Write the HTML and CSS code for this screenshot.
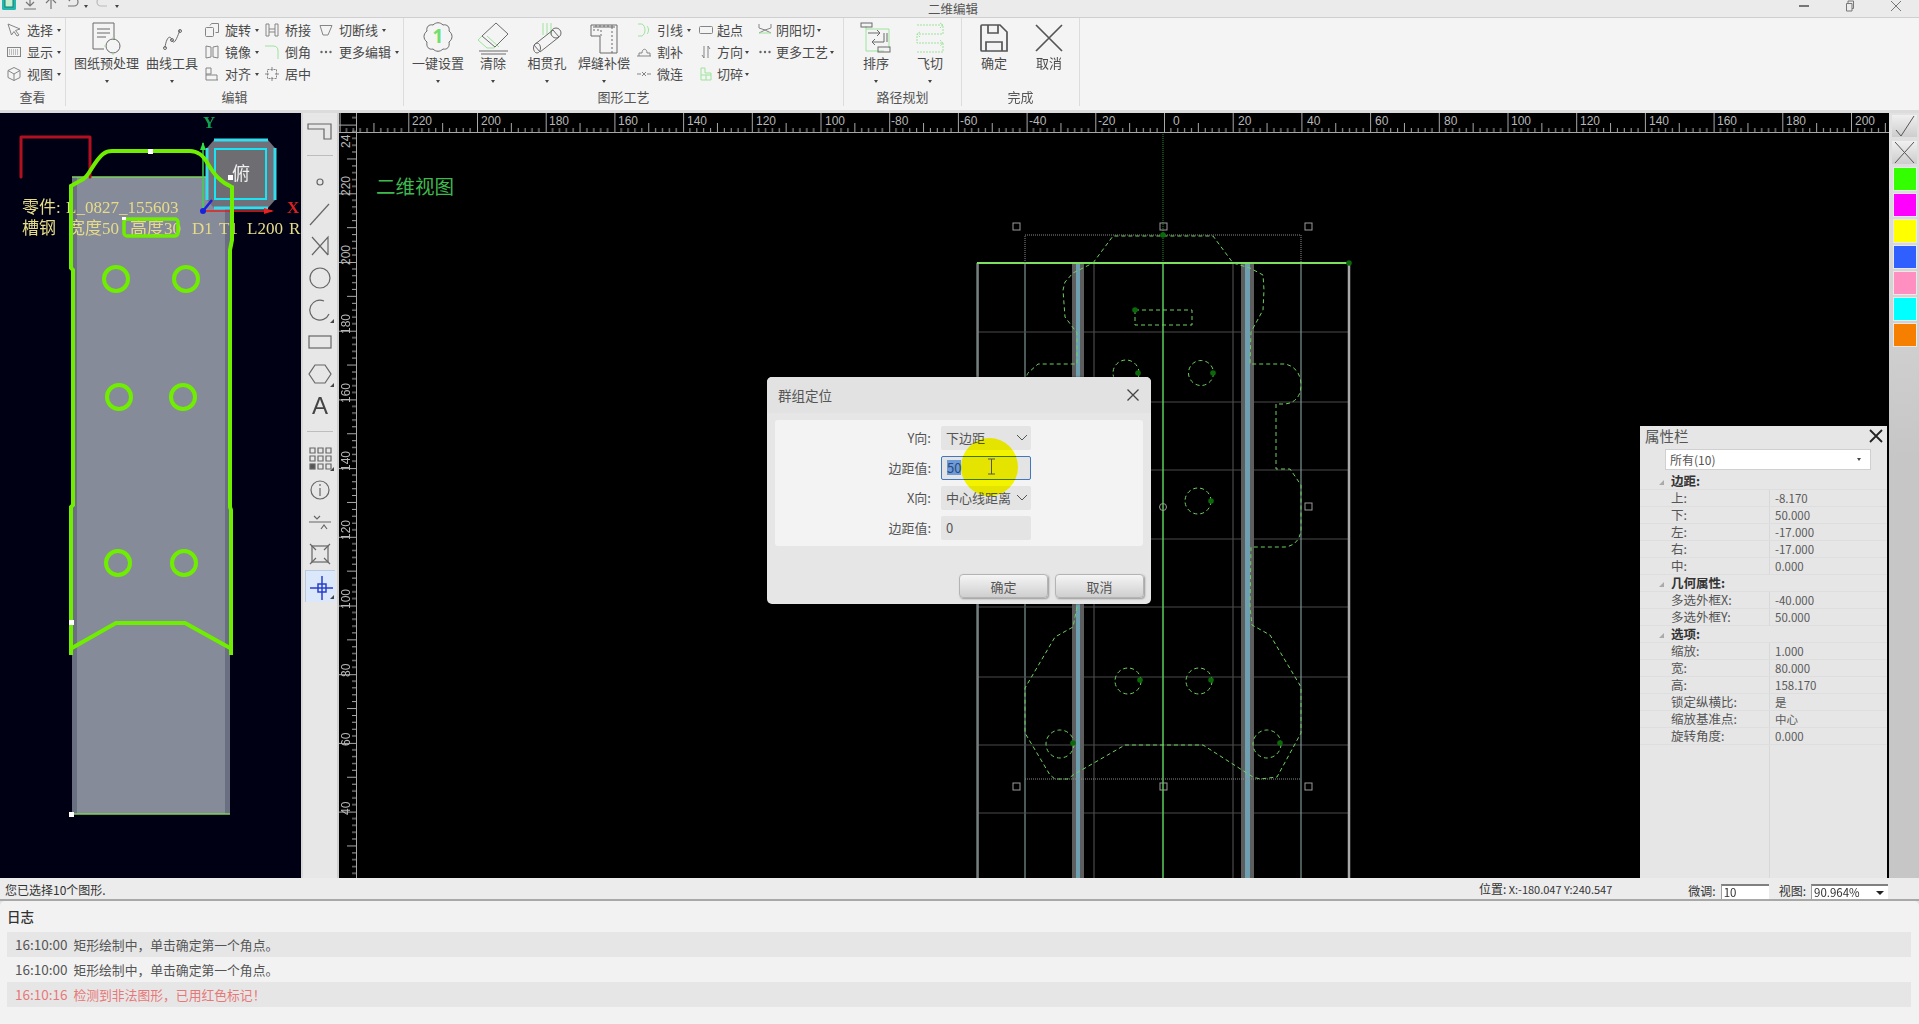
FILE: index.html
```html
<!DOCTYPE html>
<html lang="zh-CN">
<head>
<meta charset="utf-8">
<title>二维编辑</title>
<link rel="stylesheet" href="styles.css">
</head>
<body>
<div class="app">
  <header class="titlebar">
    <div class="quick">
      <svg class="logo" viewBox="0 0 14 11"><rect x="0" y="-3" width="14" height="13" rx="1.5" fill="#22b8b0"/><rect x="3" y="-1" width="8" height="8" fill="#c8f0d0" stroke="#147a70"/></svg>
      <svg class="qa" viewBox="0 0 14 14"><path d="M7 0V8M3 5l4 4 4-4M1 12H13"/></svg>
      <svg class="qa" viewBox="0 0 14 14"><path d="M7 12V1M2 6l5-5 5 5"/></svg>
      <svg class="qa" viewBox="0 0 14 14"><path d="M2 1 H9 a3.5 3.5 0 0 1 0 8 H3M2 1l3-2M2 1l3 3"/></svg>
      <i class="caret"></i>
      <svg class="qa faint" viewBox="0 0 14 14"><path d="M12 1 H5 a3.5 3.5 0 0 0 0 8 H11"/></svg>
      <i class="caret"></i>
    </div>
    <div class="apptitle">二维编辑</div>
    <div class="winbtns">
      <div class="winbtn"><svg viewBox="0 0 12 12"><path d="M1 6H11" stroke-width="2"/></svg></div>
      <div class="winbtn"><svg viewBox="0 0 12 12"><path d="M2.500 3.500H8V11H2.500ZM4 3.500V1H9.500V8.500H8"/></svg></div>
      <div class="winbtn"><svg viewBox="0 0 12 12"><path d="M1 1L11 11M11 1L1 11"/></svg></div>
    </div>
  </header>

  <section class="ribbon">
    <div class="group g-view">
      <div class="group-body pad7">
        <div class="col">
          <div class="tool"><svg class="ic" viewBox="0 0 14 14"><path d="M1 1L13 6L8.500 7.500L12 12L10 13L7 8.500L4.500 12Z"/></svg><span>选择</span><i class="caret"></i></div>
          <div class="tool"><svg class="ic" viewBox="0 0 14 14"><rect x="0.500" y="2.500" width="13" height="9"/><path d="M2 5H12M2 7H12M2 9H12" stroke-dasharray="1 1"/></svg><span>显示</span><i class="caret"></i></div>
          <div class="tool"><svg class="ic" viewBox="0 0 14 14"><path d="M7 .5L13 3.500V10.500L7 13.500L1 10.500V3.500ZM1 3.500L7 7L13 3.500M7 7V13.500"/></svg><span>视图</span><i class="caret"></i></div>
        </div>
      </div>
      <div class="group-label">查看</div>
    </div>

    <div class="group g-edit">
      <div class="group-body pad8">
        <div class="big w65">
          <svg class="ic-big" viewBox="0 0 32 32"><path d="M2 1H23V18M13 27H2V1M6 7H19M6 11H19M6 15H15"/><circle cx="22" cy="24" r="7"/><path d="M22 15V17M22 31V33M13 24H15" class="gr"/></svg>
          <span>图纸预处理</span><i class="caret"></i>
        </div>
        <div class="big w52">
          <svg class="ic-big" viewBox="0 0 32 32"><path d="M9 26C10 16 14 12 16 18C18 24 21 16 24 8"/><circle cx="9" cy="26" r="1.500"/><circle cx="16" cy="18" r="1.500"/><circle cx="24" cy="9" r="1.500"/></svg>
          <span>曲线工具</span><i class="caret"></i>
        </div>
        <div class="col w54">
          <div class="tool"><svg class="ic" viewBox="0 0 14 14"><rect x="0.500" y="4.500" width="8" height="9" rx="1"/><path d="M5 2.500L6.500 .5H13.500V9.500H10.500"/></svg><span>旋转</span><i class="caret"></i></div>
          <div class="tool"><svg class="ic" viewBox="0 0 14 14"><path d="M6 2L1 1V13L6 12ZM8 2L13 1V13L8 12Z"/></svg><span>镜像</span><i class="caret"></i></div>
          <div class="tool"><svg class="ic" viewBox="0 0 14 14"><path d="M1 1V13H13M1 1H6V7H1M1 8H12V13"/></svg><span>对齐</span><i class="caret"></i></div>
        </div>
        <div class="col w45">
          <div class="tool"><svg class="ic" viewBox="0 0 14 14"><path d="M1 1H4V13H1ZM10 1H13V13H10ZM4 6H10M4 9H10"/></svg><span>桥接</span></div>
          <div class="tool"><svg class="ic gr" viewBox="0 0 14 14"><path d="M0 1H8Q13 1 13 6V14"/></svg><span>倒角</span></div>
          <div class="tool"><svg class="ic" viewBox="0 0 14 14"><rect x="2.500" y="2.500" width="9" height="9" stroke-dasharray="2 1"/><path d="M7 0V4M7 10V14M0 7H4M10 7H14"/></svg><span>居中</span></div>
        </div>
        <div class="col">
          <div class="tool"><svg class="ic" viewBox="0 0 14 14"><path d="M1 2.500H13L9 12H4Z"/></svg><span>切断线</span><i class="caret"></i></div>
          <div class="tool"><svg class="ic dots" viewBox="0 0 14 14"><circle cx="2.500" cy="7" r="1.200"/><circle cx="7" cy="7" r="1.200"/><circle cx="11.500" cy="7" r="1.200"/></svg><span>更多编辑</span><i class="caret"></i></div>
        </div>
      </div>
      <div class="group-label">编辑</div>
    </div>

    <div class="group g-craft">
      <div class="group-body pad8">
        <div class="big w52">
          <svg class="ic-big" viewBox="0 0 32 32"><path d="M11 3C14 0 18 0 21 3C25 2 28 5 27 9C31 12 31 17 27 20C28 25 25 28 21 27C18 30 14 30 11 27C7 28 4 25 5 20C1 17 1 12 5 9C4 5 7 2 11 3Z"/><text x="16" y="21" class="one">1</text></svg>
          <span>一键设置</span><i class="caret"></i>
        </div>
        <div class="big w52 ml3">
          <svg class="ic-big" viewBox="0 0 32 32"><path d="M19 1L31 12L18 25L5 14Z"/><path d="M5 14L1 18L10 26H17L18 25M10 14L22 25" class="gr"/><path d="M2 29H31M4 32H29"/></svg>
          <span>清除</span><i class="caret"></i>
        </div>
        <div class="big w56">
          <svg class="ic-big" viewBox="0 0 32 32"><path d="M12 1V13M16 1V13M20 1V13" class="gr"/><path d="M3 23L22 8L28 15L9 30Z"/><ellipse cx="25" cy="11" rx="5" ry="5"/><ellipse cx="6" cy="26" rx="3.500" ry="5"/></svg>
          <span>相贯孔</span><i class="caret"></i>
        </div>
        <div class="big w52 ml3">
          <svg class="ic-big" viewBox="0 0 32 32"><path d="M3 3H29V31H12V14H3ZM5 5H27" /><path d="M5 8H13L13 14M24 5V31M7 4H27" stroke-dasharray="2 2"/></svg>
          <span>焊缝补偿</span><i class="caret"></i>
        </div>
        <div class="col w62 ml7">
          <div class="tool"><svg class="ic gr" viewBox="0 0 14 14"><path d="M1 1H5C9 3 9 11 5 13H1M10 3C12 5 12 9 10 11"/></svg><span>引线</span><i class="caret"></i></div>
          <div class="tool"><svg class="ic" viewBox="0 0 14 14"><path d="M0 11H14M2 11V8H5C5 3 10 3 10 8H13V11"/></svg><span>割补</span></div>
          <div class="tool"><svg class="ic" viewBox="0 0 14 14"><path d="M0 7H4M10 7H14" /><path d="M5 5L7 7L5 9M9 5L7 7L9 9"/></svg><span>微连</span></div>
        </div>
        <div class="col w59">
          <div class="tool tight"><svg class="ic" viewBox="0 0 14 14"><rect x="0.500" y="3.500" width="13" height="7" rx="1"/></svg><span>起点</span></div>
          <div class="tool tight"><svg class="ic" viewBox="0 0 14 14"><path d="M5 1V13L3 10M9 13V1L11 4"/></svg><span>方向</span><i class="caret"></i></div>
          <div class="tool tight"><svg class="ic gr" viewBox="0 0 14 14"><path d="M2 1H6V6H12V13H2ZM2 8H12M7 8V13"/></svg><span>切碎</span><i class="caret"></i></div>
        </div>
        <div class="col">
          <div class="tool tight"><svg class="ic" viewBox="0 0 14 14"><path d="M1 1V5L7 7L13 5V1M1 10L7 7L13 10" /><path d="M1 10H13" class="gr"/></svg><span>阴阳切</span><i class="caret"></i></div>
          <div class="tool tight"><svg class="ic dots" viewBox="0 0 14 14"><circle cx="2.500" cy="7" r="1.200"/><circle cx="7" cy="7" r="1.200"/><circle cx="11.500" cy="7" r="1.200"/></svg><span>更多工艺</span><i class="caret"></i></div>
        </div>
      </div>
      <div class="group-label">图形工艺</div>
    </div>

    <div class="group g-path">
      <div class="group-body pad10">
        <div class="big w44">
          <svg class="ic-big" viewBox="0 0 32 32"><path d="M6 4V29H24M6 7H29V26" class="gr"/><rect x="1" y="1" width="11" height="4"/><rect x="18" y="25" width="12" height="5"/><path d="M8 11H20M17 8L20 11L17 14M24 20H12M15 17L12 20L15 23M24 11V20M27 11V20"/></svg>
          <span>排序</span><i class="caret"></i>
        </div>
        <div class="big w44 ml10">
          <svg class="ic-big" viewBox="0 0 32 32"><path d="M3 3H29V12H3V21H29V30H3M26 1L29 3L26 6M6 10L3 12L6 15M26 18L29 21L26 24" class="gr" stroke-dasharray="2 1"/></svg>
          <span>飞切</span><i class="caret"></i>
        </div>
      </div>
      <div class="group-label">路径规划</div>
    </div>

    <div class="group g-done">
      <div class="group-body pad10">
        <div class="big w44">
          <svg class="ic-big strong" viewBox="0 0 32 32"><path d="M4 3H22L29 10V29H4C3 29 3 28 3 28V4C3 4 3 3 4 3ZM10 3V11H20V3M8 29V20H24V29"/></svg>
          <span>确定</span>
        </div>
        <div class="big w44 ml11">
          <svg class="ic-big strong" viewBox="0 0 32 32"><path d="M3 3L29 29M29 3L3 29"/></svg>
          <span>取消</span>
        </div>
      </div>
      <div class="group-label">完成</div>
    </div>
  </section>

  <main class="workspace">
    <div class="preview">
      <svg class="fill-svg" viewBox="0 113 301 765">
        <rect x="72" y="177" width="158" height="637" class="plate"/>
        <rect x="72" y="177" width="5" height="637" class="plate-edge"/>
        <rect x="225" y="177" width="5" height="637" class="plate-edge"/>
        <path d="M72 177H230" class="plate-top"/>
        <path d="M72 814H230" class="plate-top"/>
        <path d="M21 177V137H90V177" class="redline"/>
        <polygon points="214,140 268,140 275,148 275,200 268,208 214,208 207,200 207,148" class="cube"/>
        <path d="M207 148V200M275 148V200M214 140H268M214 208H268" class="cube-edge"/>
        <rect x="215" y="149" width="51" height="50" class="cube-inner"/>
        <text x="232" y="180" class="cube-text">俯</text>
        <path d="M203 143V210" class="axis-y"/>
        <path d="M205 211H272" class="axis-x"/>
        <path d="M203 211L212 200" class="axis-z"/>
        <circle cx="203" cy="211" r="3" class="axis-dot"/>
        <path d="M200 150L203 142L206 150Z" class="arrow-y"/>
        <path d="M264 208L274 211L264 214Z" class="arrow-x"/>
        <text x="203" y="128" class="lbl-y">Y</text>
        <text x="287" y="213" class="lbl-x">X</text>
        <text y="213" class="partname"><tspan x="22">零件:</tspan><tspan x="66">L_0827_155603</tspan></text>
        <text y="234" class="partname"><tspan x="22">槽钢</tspan><tspan x="68">宽度50</tspan><tspan x="130">高度30</tspan><tspan x="192">D1</tspan><tspan x="219">T1</tspan><tspan x="247">L200</tspan><tspan x="289">R</tspan></text>
        <path d="M71 655V507L73 505V270L71 268V186L78 182C88 178 90 170 96 162C101 155 105 151 112 151H190C198 151 203 155 208 164C214 174 220 182 232 187V240L230 250V507L231 510V655" class="outline"/>
        <path d="M72 648L116 623H185L230 648" class="outline"/>
        <rect x="124" y="219" width="54" height="17" rx="3" class="outline thin"/>
        <circle cx="116" cy="279" r="12" class="outline"/>
        <circle cx="186" cy="279" r="12" class="outline"/>
        <circle cx="119" cy="397" r="12" class="outline"/>
        <circle cx="183" cy="397" r="12" class="outline"/>
        <circle cx="118" cy="563" r="12" class="outline"/>
        <circle cx="184" cy="563" r="12" class="outline"/>
        <rect x="148" y="149" width="5" height="5" class="marker"/>
        <rect x="228" y="175" width="5" height="5" class="marker"/>
        <rect x="69" y="620" width="5" height="5" class="marker"/>
        <rect x="69" y="812" width="5" height="5" class="marker"/>
        <rect x="122" y="217" width="4" height="3" class="marker"/>
      </svg>
    </div>

    <nav class="toolstrip">
      <div class="st"><svg viewBox="0 0 26 20"><path d="M1 2H24V17H17V7H1Z"/></svg></div>
      <div class="st-sep first"></div>
      <div class="st"><svg viewBox="0 0 26 26"><circle cx="13" cy="13" r="3"/></svg></div>
      <div class="st"><svg viewBox="0 0 26 26"><path d="M3 24L22 3"/></svg></div>
      <div class="st"><svg viewBox="0 0 26 26"><path d="M5 4L21 22M5 22L21 4V22"/></svg></div>
      <div class="st"><svg viewBox="0 0 26 26"><circle cx="13" cy="13" r="10"/></svg></div>
      <div class="st grip"><svg viewBox="0 0 26 26"><path d="M17 4A10 10 0 1 0 22 17"/></svg></div>
      <div class="st"><svg viewBox="0 0 26 26"><rect x="2" y="7" width="22" height="12"/></svg></div>
      <div class="st grip"><svg viewBox="0 0 26 26"><path d="M8 4H18L24 13L18 22H8L2 13Z"/></svg></div>
      <div class="st a-glyph">A</div>
      <div class="st-sep"></div>
      <div class="st grip"><svg viewBox="0 0 26 26" class="gridicon"><path d="M3 3h5v5H3zM11 3h5v5h-5zM19 3h5v5h-5zM3 11h5v5H3zM11 11h5v5h-5zM19 11h5v5h-5zM11 19h5v5h-5zM19 19h5v5h-5z"/><rect x="3" y="19" width="5" height="5" class="solid"/></svg></div>
      <div class="st"><svg viewBox="0 0 26 26"><circle cx="13" cy="13" r="9"/><path d="M13 11V19M13 7V9"/></svg></div>
      <div class="st"><svg viewBox="0 0 26 26"><path d="M2 13H24M7 7L10 10L13 7M14 20L17 16L20 20"/></svg></div>
      <div class="st"><svg viewBox="0 0 26 26"><rect x="5" y="5" width="16" height="16"/><path d="M3 3L9 9M23 3L17 9M3 23L9 17M23 23L17 17"/></svg></div>
      <div class="st active grip"><svg viewBox="0 0 26 26" class="blue"><path d="M2 14H25M14 2V26"/><rect x="10" y="10" width="8" height="8"/></svg></div>
    </nav>

    <div class="canvas">
      <svg class="fill-svg" viewBox="339 113 1550 765">
        <defs>
          <pattern id="hticks" patternUnits="userSpaceOnUse" x="1164" y="113" width="68.7" height="19">
            <path class="tick" d="M.5 0V19M6.870 15V19M13.740 15V19M20.610 15V19M27.480 15V19M34.350 10V19M41.220 15V19M48.090 15V19M54.960 15V19M61.830 15V19"/>
          </pattern>
          <pattern id="vticks" patternUnits="userSpaceOnUse" x="339" y="262" width="18" height="68.7">
            <path class="tick" d="M0 .5H18M13 6.870H18M13 13.740H18M13 20.610H18M13 27.480H18M8 34.350H18M13 41.220H18M13 48.090H18M13 54.960H18M13 61.830H18"/>
          </pattern>
        </defs>

        <g class="grid">
          <path d="M977 263V878M1025 263V878" class="g-teal"/>
          <path d="M1094 263V878M1233 263V878" class="g-dim"/>
          <path d="M977 332H1349M977 402H1349M977 470H1349M977 539H1349M977 607H1349M977 677H1349M977 745H1349M977 813H1349" class="g-dim"/>
          <path d="M1301 263V878" class="g-teal"/>
          <path d="M978 263V878" class="g-edge"/>
          <path d="M1349 263V878" class="g-edge strong"/>
          <rect x="1072" y="263" width="12" height="615" class="band"/>
          <rect x="1076" y="263" width="4" height="615" class="band-mid"/>
          <rect x="1241" y="263" width="13" height="615" class="band"/>
          <rect x="1245" y="263" width="5" height="615" class="band-mid"/>
          <path d="M1163 132V263" class="center-dot"/>
          <path d="M1163 263V878" class="center"/>
          <path d="M977 263H1349" class="topline"/>
        </g>
        <path d="M1025 263V235H1301V263M1025 779H1301" class="bbox"/>
        <path d="M1093 263L1113 236H1213L1233 263L1250 268L1263 275L1264 290L1263 310L1251 332L1250 364H1285C1295 366 1301 374 1301 385C1301 395 1296 403 1285 404H1276V469H1290L1301 485V530C1300 540 1294 546 1285 547H1251L1250 607L1252 625L1270 635L1301 687V733L1277 777L1260 779L1253 777L1203 745H1125L1073 775L1068 779H1055L1050 775L1025 733V688L1055 637L1073 627L1077 607V547H1041C1032 546 1026 540 1025 530V485L1036 470H1050V404H1041C1030 403 1025 395 1025 385C1025 378 1028 373 1028 373L1038 364H1077V333L1065 317L1063 290L1065 282L1073 273Z" class="dash"/>
        <rect x="1135" y="310" width="57" height="15" class="dash"/>
        <circle cx="1126" cy="373" r="13" class="dash"/>
        <circle cx="1201" cy="373" r="12.500" class="dash"/>
        <circle cx="1198" cy="501" r="13" class="dash"/>
        <circle cx="1128" cy="681" r="13" class="dash"/>
        <circle cx="1199" cy="681" r="13" class="dash"/>
        <circle cx="1060" cy="744" r="14" class="dash"/>
        <circle cx="1267" cy="744" r="14" class="dash"/>
        <g class="dots-g">
          <circle cx="1163" cy="235" r="2.800"/><circle cx="1349" cy="263" r="2.800"/><circle cx="1135" cy="310" r="2.800"/>
          <circle cx="1138" cy="373" r="2.800"/><circle cx="1213" cy="373" r="2.800"/><circle cx="1211" cy="501" r="2.800"/>
          <circle cx="1140" cy="680" r="2.800"/><circle cx="1211" cy="680" r="2.800"/><circle cx="1073" cy="743" r="2.800"/><circle cx="1280" cy="743" r="2.800"/>
        </g>
        <g class="handles">
          <rect x="1013" y="223" width="7" height="7"/><rect x="1160" y="223" width="7" height="7"/><rect x="1305" y="223" width="7" height="7"/>
          <rect x="1305" y="503" width="7" height="7"/><circle cx="1163" cy="507" r="3.500"/>
          <rect x="1013" y="783" width="7" height="7"/><rect x="1160" y="783" width="7" height="7"/><rect x="1305" y="783" width="7" height="7"/>
        </g>

        <rect x="339" y="113" width="1550" height="19" fill="url(#hticks)"/>
        <rect x="339" y="113" width="18" height="765" fill="url(#vticks)"/>
        <path d="M339 132.500H1889M356.500 113V878" class="rulerline"/>
        <g class="rule-h">
          <text x="412" y="125">220</text><text x="481" y="125">200</text><text x="549" y="125">180</text><text x="618" y="125">160</text><text x="687" y="125">140</text><text x="756" y="125">120</text><text x="825" y="125">100</text><text x="891" y="125">-80</text><text x="960" y="125">-60</text><text x="1029" y="125">-40</text><text x="1098" y="125">-20</text>
          <text x="1173" y="125">0</text><text x="1238" y="125">20</text><text x="1307" y="125">40</text><text x="1375" y="125">60</text><text x="1444" y="125">80</text><text x="1511" y="125">100</text><text x="1580" y="125">120</text><text x="1649" y="125">140</text><text x="1717" y="125">160</text><text x="1786" y="125">180</text><text x="1855" y="125">200</text>
        </g>
        <g class="rule-v">
          <text transform="translate(350 148) rotate(-90)">24</text>
          <text transform="translate(350 196) rotate(-90)" text-anchor="start">220</text>
          <text transform="translate(350 265) rotate(-90)">200</text>
          <text transform="translate(350 334) rotate(-90)">180</text>
          <text transform="translate(350 403) rotate(-90)">160</text>
          <text transform="translate(350 471) rotate(-90)">140</text>
          <text transform="translate(350 540) rotate(-90)">120</text>
          <text transform="translate(350 609) rotate(-90)">100</text>
          <text transform="translate(350 677) rotate(-90)">80</text>
          <text transform="translate(350 746) rotate(-90)">60</text>
          <text transform="translate(350 815) rotate(-90)">40</text>
        </g>
        <text x="376" y="194" class="view-name">二维视图</text>
      </svg>

      <aside class="props">
        <div class="props-head"><span>属性栏</span><svg viewBox="0 0 14 14"><path d="M1 1L13 13M13 1L1 13"/></svg></div>
        <div class="props-select"><span>所有(10)</span><i class="caret"></i></div>
        <div class="prow head"><div class="pk"><i class="tri"></i>边距:</div></div>
        <div class="prow"><div class="pk">上:</div><div class="pv">-8.170</div></div>
        <div class="prow"><div class="pk">下:</div><div class="pv">50.000</div></div>
        <div class="prow"><div class="pk">左:</div><div class="pv">-17.000</div></div>
        <div class="prow"><div class="pk">右:</div><div class="pv">-17.000</div></div>
        <div class="prow"><div class="pk">中:</div><div class="pv">0.000</div></div>
        <div class="prow head"><div class="pk"><i class="tri"></i>几何属性:</div></div>
        <div class="prow"><div class="pk">多选外框X:</div><div class="pv">-40.000</div></div>
        <div class="prow"><div class="pk">多选外框Y:</div><div class="pv">50.000</div></div>
        <div class="prow head"><div class="pk"><i class="tri"></i>选项:</div></div>
        <div class="prow"><div class="pk">缩放:</div><div class="pv">1.000</div></div>
        <div class="prow"><div class="pk">宽:</div><div class="pv">80.000</div></div>
        <div class="prow"><div class="pk">高:</div><div class="pv">158.170</div></div>
        <div class="prow"><div class="pk">锁定纵横比:</div><div class="pv">是</div></div>
        <div class="prow"><div class="pk">缩放基准点:</div><div class="pv">中心</div></div>
        <div class="prow"><div class="pk">旋转角度:</div><div class="pv">0.000</div></div>
        <div class="props-rest"></div>
      </aside>

      <div class="dialog">
        <div class="dlg-head"><span>群组定位</span><svg viewBox="0 0 12 12"><path d="M.5 .5L11.500 11.500M11.500 .5L.5 11.500"/></svg></div>
        <div class="dlg-body">
          <label>Y向:</label><div class="field">下边距<svg class="chev" viewBox="0 0 12 7"><path d="M1 1L6 6L11 1"/></svg></div>
          <label>边距值:</label><div class="field focus"><span class="sel">50</span></div>
          <label>X向:</label><div class="field">中心线距离<svg class="chev" viewBox="0 0 12 7"><path d="M1 1L6 6L11 1"/></svg></div>
          <label>边距值:</label><div class="field">0</div>
        </div>
        <div class="dlg-foot"><button>确定</button><button>取消</button></div>
        <div class="spot"></div>
        <svg class="ibeam" viewBox="0 0 9 17"><path d="M1 1H8M4.500 1V16M1 16H8"/></svg>
      </div>
    </div>

    <div class="sidebar">
      <div class="sbtn"><svg viewBox="0 0 25 22"><path d="M4 15L9 21L22 1"/></svg></div>
      <div class="sbtn tall"><svg viewBox="0 0 25 23"><path d="M3 1L22 22M22 1L3 22"/></svg></div>
      <div class="swatch c1"></div>
      <div class="swatch c2"></div>
      <div class="swatch c3"></div>
      <div class="swatch c4"></div>
      <div class="swatch c5"></div>
      <div class="swatch c6"></div>
      <div class="swatch c7"></div>
    </div>
  </main>

  <footer class="status">
    <div class="status-msg">您已选择10个图形.</div>
    <div class="status-right">
      <div class="pos"><span class="pos-lab">位置:</span> X:-180.047 Y:240.547</div>
      <span class="st-lab">微调:</span><div class="st-input w48">10</div>
      <span class="st-lab ml10">视图:</span><div class="st-input w77">90.964%<i class="caret dark"></i></div>
    </div>
  </footer>

  <section class="log">
    <div class="log-title">日志</div>
    <div class="log-row alt"><span class="t">16:10:00</span>矩形绘制中，单击确定第一个角点。</div>
    <div class="log-row"><span class="t">16:10:00</span>矩形绘制中，单击确定第一个角点。</div>
    <div class="log-row alt err"><span class="t">16:10:16</span>检测到非法图形，已用红色标记！</div>
  </section>
</div>
</body>
</html>
```

FILE: styles.css
```css
* { box-sizing: border-box; }
html, body { margin: 0; height: 100%; overflow: hidden; background: #e2e2e2; }
body { font-family: "Noto Sans CJK SC", "Noto Sans", sans-serif; font-size: 13px; color: #4a4a4a; }
.app { width: 1919px; height: 1024px; display: flex; flex-direction: column; overflow: hidden; filter: blur(.35px); }

/* title bar */
.titlebar { height: 18px; flex: none; display: grid; grid-template-columns: 907px 92px 1fr; background: #ebebeb; border-bottom: 1px solid #cfcfcf; overflow: hidden; }
.quick { display: flex; align-items: flex-start; }
.logo { width: 14px; height: 11px; margin-left: 2px; }
.qa { width: 14px; height: 14px; margin-left: 7px; margin-top: -3px; fill: none; stroke: #777; stroke-width: 1.2; }
.qa.faint { stroke: #bbb; margin-left: 8px; }
.quick .caret { margin: 5px 0 0 5px; }
.apptitle { text-align: center; font-size: 12.500px; line-height: 17px; height: 17px; color: #555; }
.winbtns { display: flex; justify-content: flex-end; }
.winbtn { width: 46px; display: flex; justify-content: center; }
.winbtn svg { width: 12px; height: 12px; fill: none; stroke: #777; stroke-width: 1; }
.caret { display: inline-block; width: 0; height: 0; border-left: 2px solid transparent; border-right: 2px solid transparent; border-top: 3px solid #444; }

/* ribbon */
.ribbon { height: 95px; flex: none; display: flex; background: #f4f4f4; border-bottom: 3px solid #dcdcdc; }
.group { display: flex; flex-direction: column; border-right: 1px solid #dcdcdc; height: 88px; }
.group-body { height: 70px; display: flex; padding-top: 1px; }
.group-label { height: 17px; line-height: 18px; text-align: center; color: #555; }
.g-view { width: 66px; } .g-edit { width: 338px; } .g-craft { width: 440px; } .g-path { width: 118px; } .g-done { width: 118px; }
.pad7 { padding-left: 7px; } .pad8 { padding-left: 8px; } .pad10 { padding-left: 10px; }
.col { display: flex; flex-direction: column; }
.w54 { width: 54px; margin-left: 7px; margin-right: 6px; } .w45 { width: 45px; margin-right: 9px; } .w62 { width: 62px; } .w59 { width: 59px; }
.tool { height: 22px; display: flex; align-items: center; gap: 6px; line-height: 22px; white-space: nowrap; }
.tool.tight { gap: 4px; }
.tool .caret { margin-left: -2px; }
.ic { width: 14px; height: 14px; flex: none; fill: none; stroke: #858585; stroke-width: 1; }
.ic.gr, .gr { stroke: #9ce49c; }
.ic.dots { fill: #666; stroke: none; }
.big { display: flex; flex-direction: column; align-items: center; white-space: nowrap; padding-top: 3px; }
.big span { line-height: 18px; height: 18px; }
.big .caret { margin-top: 8px; }
.ic-big { width: 32px; height: 32px; flex: none; fill: none; stroke: #6a6a6a; stroke-width: 1; overflow: visible; }
.ic-big.strong { stroke: #555; stroke-width: 1.700; }
.one { font: 700 19px "Noto Sans", sans-serif; fill: #6fe06f; stroke: none; text-anchor: middle; }
.w44 { width: 44px; } .w52 { width: 52px; } .w56 { width: 56px; } .w65 { width: 65px; margin-right: 7px; }
.ml3 { margin-left: 3px; } .ml7 { margin-left: 7px; } .ml10 { margin-left: 10px; } .ml11 { margin-left: 11px; }

/* workspace */
.workspace { height: 765px; flex: none; display: flex; }
.preview { width: 301px; flex: none; background: #000014; }
.fill-svg { display: block; width: 100%; height: 100%; }
.plate { fill: #868b99; }
.plate-edge { fill: #6a6f82; }
.plate-top { stroke: #7fd060; stroke-width: 1.500; fill: none; }
.redline { stroke: #b01020; stroke-width: 3; fill: none; stroke-linejoin: round; stroke-linecap: round; }
.cube { fill: #70707a; }
.cube-edge { stroke: #35dcec; stroke-width: 3; fill: none; }
.cube-inner { fill: #6e6e72; stroke: #18e4f4; stroke-width: 2; }
.cube-text { font-size: 18px; fill: #f0f0f0; }
.axis-y { stroke: #40d050; stroke-width: 1.500; }
.axis-x { stroke: #e02020; stroke-width: 1.500; }
.axis-z { stroke: #1820e0; stroke-width: 2.500; }
.axis-dot { fill: #1820e0; }
.arrow-y { fill: #30e040; }
.arrow-x { fill: #e82020; }
.lbl-y, .lbl-x { font: 700 17px "Liberation Serif", serif; }
.lbl-y { fill: #10a050; }
.lbl-x { fill: #d82020; }
.partname { font: 17px "Liberation Serif", "Noto Sans CJK SC", serif; fill: #e6dc88; }
.outline { fill: none; stroke: #6fee00; stroke-width: 4; }
.outline.thin { stroke-width: 3.500; }
.marker { fill: #fff; }

/* tool strip */
.toolstrip { width: 38px; flex: none; background: #e7e7e7; border-left: 2px solid #d8d8d8; border-right: 2px solid #cfcfcf; display: flex; flex-direction: column; align-items: center; padding-top: 9px; }
.st { width: 30px; height: 32px; flex: none; display: flex; align-items: center; justify-content: center; position: relative; }
.st svg { width: 26px; height: 26px; fill: none; stroke: #666; stroke-width: 1.200; }
.st:first-child { height: 20px; }
.st:first-child svg { height: 20px; }
.st-sep { width: 26px; height: 1px; flex: none; background: #bdbdbd; margin: 9px 0 10px; }
.st-sep.first { margin: 13px 0 10px; }
.st.grip::after { content: ""; position: absolute; right: 1px; bottom: 3px; border-left: 4px solid transparent; border-bottom: 4px solid #444; }
.a-glyph { font: 24px "Liberation Sans", sans-serif; color: #444; }
.gridicon { stroke-width: 1; stroke: #777; }
.gridicon .solid { fill: #555; }
.st.active { background: #dbe8fb; border-top: 1px solid #bcc8dc; border-left: 1px solid #bcc8dc; }
.st svg.blue { stroke: #2a3ecc; stroke-width: 1.500; }

/* canvas */
.canvas { flex: 1; background: #000; position: relative; overflow: hidden; }
.tick { stroke: #a8a8a8; stroke-width: 1; fill: none; }
.rulerline { stroke: #a8a8a8; stroke-width: 1; fill: none; }
.rule-h text, .rule-v text { font: 12px "Liberation Sans", sans-serif; fill: #b8b8b8; }
.view-name { font-size: 19.500px; fill: #3fb84f; }
.grid path, .grid rect { fill: none; }
.g-teal { stroke: #7e9494; stroke-width: 1.200; }
.g-dim { stroke: #4a4a4a; stroke-width: 1.200; }
.g-edge { stroke: #8a8a8a; stroke-width: 1.500; }
.g-edge.strong { stroke: #a8a8a8; stroke-width: 2.500; }
.grid .band { fill: #5e5e5e; }
.grid .band-mid { fill: #6e9fb0; }
.center { stroke: #5ccc5c; stroke-width: 1.500; }
.center-dot { stroke: #1f8a2a; stroke-width: 1; stroke-dasharray: 1 1; }
.topline { stroke: #7ee060; stroke-width: 2; }
.bbox { fill: none; stroke: #8a8a8a; stroke-width: 1; stroke-dasharray: 1 1; }
.dash { fill: none; stroke: #6ed060; stroke-width: 1; stroke-dasharray: 4 3; }
.dots-g circle { fill: #0a6a0a; }
.handles rect, .handles circle { fill: none; stroke: #9a9a9a; stroke-width: 1; }

/* property panel */
.props { position: absolute; right: 2px; top: 313px; bottom: 0; width: 247px; background: #e6e6e6; display: flex; flex-direction: column; font-size: 12.500px; color: #555; }
.props-head { height: 20px; padding: 0 4px 0 5px; margin-top: -1px; display: flex; justify-content: space-between; align-items: center; font-size: 14.500px; }
.props-head svg { width: 14px; height: 14px; margin-top: 2px; fill: none; stroke: #222; stroke-width: 1.800; }
.props-select { margin: 4px 0 0 25px; width: 206px; height: 21px; flex: none; background: #fff; border: 1px solid #d0d0d0; padding: 0 9px 0 4px; display: flex; align-items: center; justify-content: space-between; font-size: 12px; }
.prow { height: 17px; flex: none; display: grid; grid-template-columns: 129px 1fr; line-height: 16px; border-bottom: 1px solid #dedede; }
.props-select + .prow { margin-top: 3px; }
.pk { padding-left: 31px; white-space: nowrap; }
.pv { padding-left: 5px; border-left: 1px solid #d8d8d8; font-size: 11.500px; color: #5a5a5a; }
.head .pk { font-weight: 700; color: #333; }
.tri { display: inline-block; width: 0; height: 0; margin: 0 7px 1px -12px; border-left: 5px solid transparent; border-bottom: 5px solid #aaa; }
.props-rest { flex: 1; margin-left: 129px; border-left: 1px solid #d8d8d8; }

/* dialog */
.dialog { position: absolute; left: 428px; top: 264px; width: 384px; height: 227px; background: #e6e6e6; border-radius: 5px; box-shadow: 0 0 2px rgba(0,0,0,.5); overflow: hidden; }
.dlg-head { height: 36px; background: #e2e2e2; padding: 0 12px 0 11px; display: flex; justify-content: space-between; align-items: center; font-size: 13.500px; color: #555; }
.dlg-head svg { width: 12px; height: 12px; fill: none; stroke: #444; stroke-width: 1.300; }
.dlg-body { margin: 7px 8px 0; height: 126px; background: #f3f3f3; border-radius: 3px; padding: 6px 0; display: grid; grid-template-columns: 156px 90px; grid-auto-rows: 24px; column-gap: 10px; row-gap: 6px; }
.dlg-body label { text-align: right; line-height: 24px; color: #555; }
.field { background: #e4e4e4; border-radius: 2px; padding: 0 5px; line-height: 24px; position: relative; color: #555; white-space: nowrap; overflow: hidden; }
.field.focus { border: 1px solid #3f77c0; line-height: 22px; padding: 0 5px; }
.sel { background: #6d9bd8; color: #2a4a80; display: inline-block; line-height: 15px; }
.chev { position: absolute; right: 3px; top: 8px; width: 12px; height: 7px; fill: none; stroke: #555; stroke-width: 1; background: #e4e4e4; }
.dlg-foot { display: flex; justify-content: flex-end; gap: 7px; padding-right: 7px; margin-top: 28px; }
.dlg-foot button { width: 89px; height: 24px; font: 13px "Noto Sans CJK SC", sans-serif; color: #555; background: linear-gradient(#f5f5f5, #cfcfcf); border: 1px solid #b4b4b4; border-radius: 4px; box-shadow: 1px 1px 2px rgba(0,0,0,.35); padding: 0; }
.spot { position: absolute; left: 194px; top: 61px; width: 57px; height: 58px; border-radius: 50%; background: #ffff00; mix-blend-mode: multiply; }
.ibeam { position: absolute; left: 220px; top: 81px; width: 9px; height: 17px; fill: none; stroke: #555; stroke-width: 1; }

/* right colour bar */
.sidebar { width: 30px; flex: none; background: linear-gradient(#e2e2e2, #c6c6c6 45%); padding: 2px 0 0 3px; display: flex; flex-direction: column; gap: 4px; }
.sbtn { width: 25px; height: 22px; flex: none; background: linear-gradient(#f0f0f0, #cdcdcd); }
.sbtn.tall { height: 23px; }
.sbtn svg { display: block; width: 25px; height: 100%; fill: none; stroke: #555; stroke-width: 1; }
.swatch { width: 24px; height: 24px; margin: -1px 0 -1px 1px; flex: none; border: 1px solid #e8e8e8; }
.c1 { background: #33ff00; } .c2 { background: #ff00ff; } .c3 { background: #ffff00; } .c4 { background: #2f5fff; } .c5 { background: #ff8fc0; } .c6 { background: #00ffff; } .c7 { background: #f77f00; }

/* status bar */
.status { height: 23px; flex: none; display: flex; justify-content: space-between; background: #ececec; border-bottom: 2px solid #a8a8a8; font-size: 12px; color: #333; }
.status-msg { padding-left: 5px; line-height: 23px; }
.status-right { display: flex; align-items: flex-end; padding-right: 31px; }
.pos { line-height: 21px; align-self: flex-start; margin-right: 76px; font-size: 11px; }
.pos-lab { font-size: 12px; }
.st-lab { line-height: 16px; margin-right: 5px; }
.st-input { height: 15px; background: #fff; border-top: 2px solid #808080; border-left: 1px solid #a0a0a0; line-height: 13px; padding-left: 2px; font-size: 11.500px; position: relative; }
.w48 { width: 48px; } .w77 { width: 77px; }
.caret.dark { position: absolute; right: 4px; top: 5px; border-left-width: 4px; border-right-width: 4px; border-top-width: 4px; border-top-color: #222; }

/* log */
.log { flex: 1; background: #f2f2f2; border-radius: 5px 5px 0 0; padding: 5px 8px 0 7px; }
.log-title { line-height: 20px; height: 20px; margin-bottom: 6px; font-weight: 500; color: #333; font-size: 13.500px; }
.log-row { height: 25px; line-height: 25px; padding-left: 8px; color: #555; font-size: 12.800px; }
.log-row .t { font-size: 13.500px; margin-right: 6px; }
.log-row.alt { background: #e6e6e6; }
.log-row.err { color: #e87878; }
```
